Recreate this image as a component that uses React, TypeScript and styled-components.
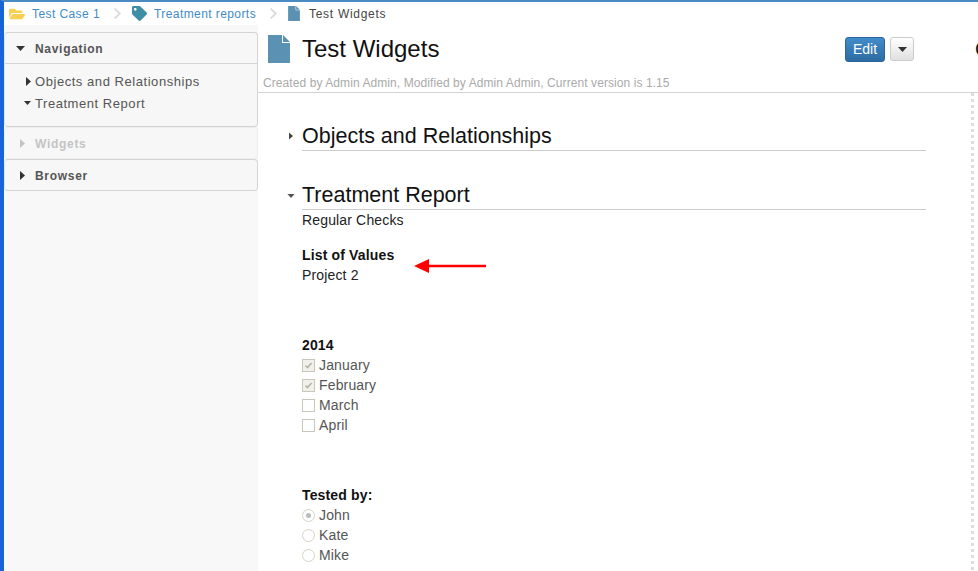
import React from "react";
import styled, { createGlobalStyle } from "styled-components";
import { FaFolderOpen, FaTag, FaChevronRight } from "react-icons/fa";

const Global = createGlobalStyle`
  html, body { margin: 0; padding: 0; background: #fff; }
  body { font-family: "Liberation Sans", Arial, sans-serif; overflow: hidden; }
`;

const Page = styled.div`
  position: relative;
  width: 978px;
  height: 571px;
  box-sizing: border-box;
  border-top: 2px solid #4a8bc2;
  border-left: 4px solid #1565d8;
  overflow: hidden;
  display: flex;
  flex-direction: column;
  background: #fff;
`;

const Breadcrumbs = styled.nav`
  height: 23px;
  flex: none;
  display: flex;
  align-items: center;
  padding-left: 5px;
  font-size: 12px;
  letter-spacing: 0.42px;
`;

const Crumb = styled.span<{ $current?: boolean; $gap: number }>`
  color: ${(p) => (p.$current ? "#444" : "#428bca")};
  margin-left: ${(p) => p.$gap}px;
  letter-spacing: ${(p) => (p.$current ? 0.7 : 0.42)}px;
`;

const Separator = styled.span`
  color: #ddd;
  display: inline-flex;
  font-size: 13px;
  margin: 0 8px 0 11px;
`;

const Body = styled.div`
  flex: 1;
  display: flex;
  min-height: 0;
`;

const Sidebar = styled.aside`
  width: 254px;
  flex: none;
  background: #f8f8f8;
  padding-top: 7px;
  box-sizing: border-box;
`;

const Panel = styled.section<{ $faded?: boolean }>`
  background: #f7f7f7;
  border: 1px solid ${(p) => (p.$faded ? "#eee" : "#d4d4d4")};
  border-radius: 4px;
  border-left-color: ${(p) => (p.$faded ? "#eee" : "#e4e4e4")};
`;

const PanelHeader = styled.div<{ $faded?: boolean; $open?: boolean; $closed?: boolean }>`
  height: ${(p) => (p.$open ? 31 : 30)}px;
  box-sizing: border-box;
  padding-top: 1px;
  display: flex;
  align-items: center;
  padding-left: ${(p) => (p.$closed ? 15 : 11)}px;
  gap: 10px;
  font-size: 12px;
  font-weight: bold;
  letter-spacing: 0.7px;
  color: ${(p) => (p.$faded ? "#c4c4c4" : "#555")};
  border-bottom: ${(p) => (p.$open ? "1px solid #d4d4d4" : "none")};
`;

const Tree = styled.ul`
  list-style: none;
  margin: 0;
  padding: 6px 0 12px 21px;
  font-size: 13px;
  letter-spacing: 0.55px;
  color: #555;
`;

const TreeItem = styled.li<{ $open?: boolean }>`
  height: 22px;
  display: flex;
  align-items: center;
  gap: 4px;
  margin-left: ${(p) => (p.$open ? -2 : 0)}px;
`;

const Tri = styled.svg`
  flex: none;
  display: block;
`;

const Main = styled.main`
  flex: 1;
  min-width: 0;
  display: flex;
  flex-direction: column;
`;

const Header = styled.header`
  height: 68px;
  flex: none;
  box-sizing: border-box;
  border-bottom: 1px solid #d4d4d4;
  padding-left: 5px;
`;

const TitleRow = styled.div`
  display: flex;
  align-items: center;
  height: 48px;
  padding-left: 5px;
`;

const Title = styled.h1`
  margin: 0 0 0 12px;
  font-size: 24px;
  font-weight: normal;
  color: #111;
  width: 543px;
  flex: none;
`;

const EditButton = styled.button`
  width: 40px;
  height: 25px;
  flex: none;
  padding: 0;
  font: 14px "Liberation Sans", Arial, sans-serif;
  color: #fff;
  border: 1px solid #2b669a;
  border-radius: 3px;
  background: linear-gradient(#428bca, #2d6ca2);
`;

const CaretButton = styled.button`
  width: 24px;
  height: 24px;
  flex: none;
  margin-left: 5px;
  padding: 0;
  display: flex;
  align-items: center;
  justify-content: center;
  border: 1px solid #ccc;
  border-radius: 3px;
  background: linear-gradient(#fff, #e0e0e0);
`;

const ClippedTitle = styled.span`
  margin-left: 61px;
  font-size: 20px;
  color: #111;
  flex: none;
`;

const Meta = styled.div`
  margin-top: 3px;
  font-size: 12px;
  letter-spacing: 0.08px;
  color: #aaa;
`;

const Content = styled.div`
  flex: 1;
  display: flex;
  min-height: 0;
`;

const Article = styled.article`
  width: 713px;
  flex: none;
  box-sizing: border-box;
  padding: 30px 45px 0 44px;
`;

const Divider = styled.div`
  width: 3px;
  flex: none;
  background: repeating-linear-gradient(#ddd 0 3px, transparent 3px 6px);
`;

const SectionHead = styled.h2<{ $gap?: number }>`
  position: relative;
  margin: 0 0 ${(p) => p.$gap ?? 0}px;
  height: 28px;
  box-sizing: border-box;
  border-bottom: 1px solid #ccc;
  font-size: 21.5px;
  font-weight: normal;
  line-height: 27px;
  color: #111;
`;

const HeadMarker = styled.span<{ $open?: boolean }>`
  position: absolute;
  left: ${(p) => (p.$open ? -15 : -13)}px;
  top: ${(p) => (p.$open ? 12 : 9)}px;
`;

const Para = styled.div`
  font-size: 14px;
  letter-spacing: 0.15px;
  line-height: 20px;
  color: #222;
`;

const Label = styled.div`
  font-size: 14px;
  font-weight: bold;
  letter-spacing: 0.15px;
  line-height: 20px;
  color: #111;
`;

const Field = styled.div<{ $top: number }>`
  margin-top: ${(p) => p.$top}px;
`;

const OptionRow = styled.div`
  display: flex;
  align-items: center;
  gap: 4px;
  height: 20px;
  font-size: 14px;
  letter-spacing: 0.15px;
  color: #555;
`;

const CheckBox = styled.span<{ $on?: boolean }>`
  width: 11px;
  height: 11px;
  flex: none;
  border: 1px solid #c9c7ba;
  background: ${(p) => (p.$on ? "#f1f1ec" : "#fff")};
  display: flex;
`;

const Radio = styled.span<{ $on?: boolean }>`
  width: 11px;
  height: 11px;
  flex: none;
  border: 1px solid #d6d4c8;
  border-radius: 50%;
  background: #fff;
  display: flex;
  align-items: center;
  justify-content: center;
  &::after {
    content: "";
    width: 5px;
    height: 5px;
    border-radius: 50%;
    background: ${(p) => (p.$on ? "#bbb" : "transparent")};
  }
`;

const Arrow = styled.svg`
  position: absolute;
  left: 410px;
  top: 256px;
`;

const TriRight = ({ color = "#333", w = 5, h = 9 }: { color?: string; w?: number; h?: number }) => (
  <Tri width={w} height={h} viewBox="0 0 5 9"><path d="M0 0l5 4.5L0 9z" fill={color} /></Tri>
);
const TriDown = ({ color = "#333", w = 9, h = 5 }: { color?: string; w?: number; h?: number }) => (
  <Tri width={w} height={h} viewBox="0 0 9 5"><path d="M0 0h9L4.5 5z" fill={color} /></Tri>
);

const FileSvg = styled.svg`
  flex: none;
  display: block;
`;

const FileIcon = ({ w, h }: { w: number; h: number }) => (
  <FileSvg width={w} height={h} viewBox="0 0 22 28">
    <path d="M0 0h14v8h8v20H0z" fill="#5b92b3" />
    <path d="M15 0l7 7h-7z" fill="#5b92b3" />
  </FileSvg>
);

const Check = () => (
  <svg width="11" height="11" viewBox="0 0 11 11"><path d="M2.500 5.500l2 2 4-4.500" fill="none" stroke="#b4b2a6" strokeWidth="1.6" /></svg>
);

export default function App() {
  return (
    <Page>
      <Global />
      <Breadcrumbs>
        <FaFolderOpen color="#f7cf53" size={16} />
        <Crumb $gap={7}>Test Case 1</Crumb>
        <Separator><FaChevronRight /></Separator>
        <FaTag color="#3f8ea8" size={15} />
        <Crumb $gap={7}>Treatment reports</Crumb>
        <Separator><FaChevronRight /></Separator>
        <FileIcon w={12} h={15} />
        <Crumb $current $gap={9}>Test Widgets</Crumb>
      </Breadcrumbs>
      <Body>
        <Sidebar>
          <Panel>
            <PanelHeader $open>
              <TriDown />
              Navigation
            </PanelHeader>
            <Tree>
              <TreeItem><TriRight />Objects and Relationships</TreeItem>
              <TreeItem $open><TriDown w={7} h={4} />Treatment Report</TreeItem>
            </Tree>
          </Panel>
          <Panel $faded>
            <PanelHeader $faded $closed>
              <TriRight color="#c4c4c4" />
              Widgets
            </PanelHeader>
          </Panel>
          <Panel>
            <PanelHeader $closed>
              <TriRight />
              Browser
            </PanelHeader>
          </Panel>
        </Sidebar>
        <Main>
          <Header>
            <TitleRow>
              <FileIcon w={22} h={28} />
              <Title>Test Widgets</Title>
              <EditButton>Edit</EditButton>
              <CaretButton><TriDown w={9} h={5} /></CaretButton>
              <ClippedTitle>C</ClippedTitle>
            </TitleRow>
            <Meta>Created by Admin Admin, Modified by Admin Admin, Current version is 1.15</Meta>
          </Header>
          <Content>
            <Article>
              <SectionHead $gap={31}>
                <HeadMarker><TriRight color="#444" w={4} h={8} /></HeadMarker>
                Objects and Relationships
              </SectionHead>
              <SectionHead>
                <HeadMarker $open><TriDown color="#555" w={8} h={4} /></HeadMarker>
                Treatment Report
              </SectionHead>
              <Para>Regular Checks</Para>
              <Field $top={15}>
                <Label>List of Values</Label>
                <Para>Project 2</Para>
              </Field>
              <Field $top={50}>
                <Label>2014</Label>
                <OptionRow><CheckBox $on><Check /></CheckBox>January</OptionRow>
                <OptionRow><CheckBox $on><Check /></CheckBox>February</OptionRow>
                <OptionRow><CheckBox />March</OptionRow>
                <OptionRow><CheckBox />April</OptionRow>
              </Field>
              <Field $top={50}>
                <Label>Tested by:</Label>
                <OptionRow><Radio $on />John</OptionRow>
                <OptionRow><Radio />Kate</OptionRow>
                <OptionRow><Radio />Mike</OptionRow>
              </Field>
            </Article>
            <Divider />
          </Content>
        </Main>
      </Body>
      <Arrow width="78" height="20" viewBox="0 0 78 20">
        <path d="M0 8l15-7v5.800h57v2.400H15V15z" fill="#f00" />
      </Arrow>
    </Page>
  );
}
